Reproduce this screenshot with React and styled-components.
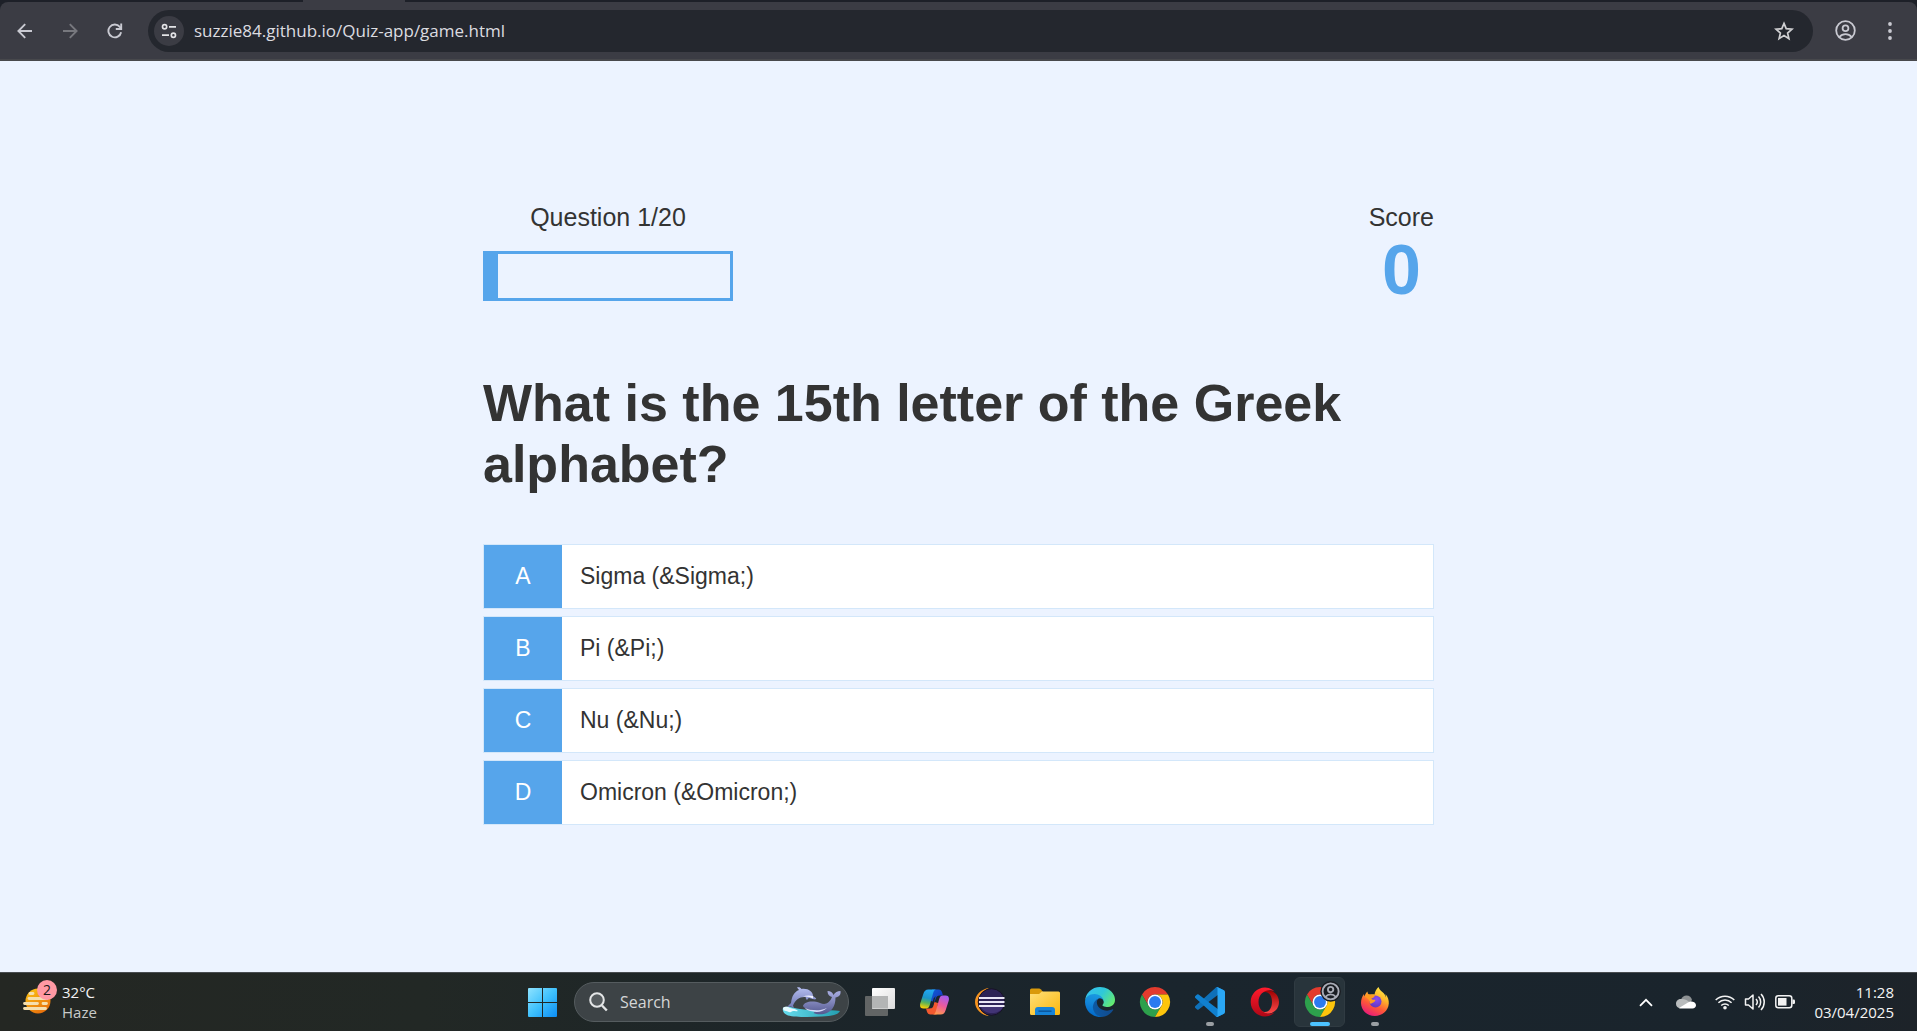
import React, { useState } from "react";
import styled, { createGlobalStyle } from "styled-components";

const UI_FONT = `"Open Sans", "Noto Sans", sans-serif`;
const PAGE_FONT = `"Liberation Sans", Arial, sans-serif`;
const BLUE = "#56a5eb";

const GlobalStyle = createGlobalStyle`
  *, *::before, *::after { box-sizing: border-box; }
  html, body, #root { height: 100%; }
  body { margin: 0; background: #ecf3ff; }
  button, input { font: inherit; color: inherit; }
  button { border: 0; background: none; padding: 0; cursor: pointer; }
  svg { display: block; flex: none; }
`;

const Screen = styled.div`
  min-height: 100%;
  display: flex;
  flex-direction: column;
  overflow: hidden;
`;

/* Browser toolbar */

const TabStrip = styled.div`
  height: 2px;
  background: #1d2028;
  display: flex;
  padding-left: 303px;
`;

const ActiveTab = styled.div`
  width: 102px;
  background: #3b3c44;
`;

const ToolbarBack = styled.div`
  background: #1d2028;
`;

const Toolbar = styled.header`
  height: 59px;
  display: flex;
  align-items: center;
  padding: 0 12px 0 10px;
  background: #3b3c44;
  border-bottom: 2px solid #47484c;
  border-radius: 8px 8px 0 0;
  font-family: ${UI_FONT};
`;

const NavButtons = styled.nav`
  display: flex;
  gap: 15px;
  margin-right: 18px;
`;

const IconButton = styled.button`
  width: 30px;
  height: 30px;
  display: grid;
  place-items: center;
  border-radius: 50%;
  color: ${(p) => (p.disabled ? "#77787e" : "#c9cad2")};
  background: ${(p) => (p.$filled ? "#3b3c44" : "transparent")};
`;

const AddressBar = styled.form`
  flex: 1;
  height: 42px;
  display: flex;
  align-items: center;
  gap: 10px;
  padding: 0 14px 0 6px;
  border-radius: 21px;
  background: #24272e;
`;

const AddressInput = styled.input`
  flex: 1;
  min-width: 0;
  height: 30px;
  border: 0;
  outline: 0;
  padding: 0;
  background: transparent;
  color: #dcdce0;
  font-size: 17px;
`;

const ToolbarActions = styled.div`
  display: flex;
  gap: 15px;
  margin-left: 17px;
`;

/* Quiz */

const Main = styled.main`
  flex: 1;
  display: flex;
  flex-direction: column;
  align-items: center;
  justify-content: center;
  padding: 0 20px;
  background: #ecf3ff;
  color: #333;
  font-family: ${PAGE_FONT};
`;

const Game = styled.section`
  width: 100%;
  max-width: 951px;
`;

const Hud = styled.div`
  display: flex;
  justify-content: space-between;
  margin-bottom: 64px;
`;

const HudItem = styled.div`
  display: flex;
  flex-direction: column;
  align-items: center;
  gap: ${(p) => p.$gap || 0}px;
`;

const HudLabel = styled.p`
  margin: 0;
  font-size: 25px;
  line-height: 28px;
`;

const ProgressBar = styled.div`
  width: 250px;
  height: 50px;
  border: 3px solid ${BLUE};
`;

const ProgressFill = styled.div`
  height: 100%;
  background: ${BLUE};
`;

const ScoreValue = styled.p`
  margin: 0;
  font-size: 70px;
  font-weight: 700;
  line-height: 78px;
  color: ${BLUE};
`;

const Question = styled.h1`
  margin: 0 0 49px;
  font-size: 52px;
  font-weight: 700;
  line-height: 61px;
`;

const Choices = styled.div`
  display: flex;
  flex-direction: column;
  gap: 7px;
  margin-bottom: 5px;
`;

const Choice = styled.button`
  width: 100%;
  min-height: 65px;
  display: flex;
  align-items: stretch;
  border: 1px solid #d3e7fa;
  background: #fff;
  font-size: 23px;
  text-align: left;
`;

const ChoicePrefix = styled.span`
  width: 78px;
  display: grid;
  place-items: center;
  background: ${BLUE};
  color: #fff;
`;

const ChoiceText = styled.span`
  flex: 1;
  display: flex;
  align-items: center;
  padding: 0 18px;
`;

/* Taskbar */

const Taskbar = styled.footer`
  height: 59px;
  display: grid;
  grid-template-columns: 1fr auto 1fr;
  align-items: center;
  border-top: 1px solid #484c50;
  background: linear-gradient(90deg, #242723 0%, #222825 22%, #1c2529 42%, #1a252d 60%, #1a242c 90%, #1d2329 100%);
  color: #f4f4f4;
  font-family: ${UI_FONT};
  font-size: 15px;
  line-height: 20px;
`;

const Weather = styled.button`
  justify-self: start;
  display: flex;
  align-items: center;
  gap: 4px;
  margin-left: 22px;
  text-align: left;
`;

const WeatherIcon = styled.span`
  position: relative;
  width: 36px;
  height: 44px;
  display: block;
`;

const Badge = styled.span`
  position: absolute;
  top: 0;
  left: 15px;
  width: 20px;
  height: 20px;
  border-radius: 50%;
  background: #ff99a4;
  color: #1a1a1a;
  font-size: 14px;
  text-align: center;
`;

const Line = styled.span`
  display: block;
  color: ${(p) => (p.$muted ? "#c8cac9" : "inherit")};
`;

const Dock = styled.nav`
  display: flex;
  align-items: center;
`;

const AppButton = styled.button`
  position: relative;
  width: 55px;
  height: 50px;
  display: grid;
  place-items: center;

  &::before {
    content: "";
    position: absolute;
    inset: 0 2px;
    border-radius: 6px;
    background: ${(p) => (p.$active ? "#28343b" : "transparent")};
    border: 1px solid ${(p) => (p.$active ? "#303b42" : "transparent")};
  }
  &::after {
    content: "";
    position: absolute;
    bottom: 1px;
    height: 4px;
    width: ${(p) => (p.$active ? 20 : p.$running ? 8 : 0)}px;
    border-radius: 2px;
    background: ${(p) => (p.$active ? "#4cc2ff" : "#9a9fa3")};
  }
  svg { position: relative; }
`;

const SearchBox = styled.label`
  width: 275px;
  height: 40px;
  display: flex;
  align-items: center;
  gap: 12px;
  margin: 0 3px 0 4px;
  padding: 0 6px 0 14px;
  border: 1px solid #555c5f;
  border-radius: 20px;
  background: #3d4346;
`;

const SearchInput = styled.input`
  flex: 1;
  min-width: 0;
  border: 0;
  outline: 0;
  padding: 0;
  background: transparent;
  font-size: 16px;
  &::placeholder { color: #d4d6d7; opacity: 1; }
`;

const Tray = styled.div`
  justify-self: end;
  display: flex;
  align-items: center;
  margin-right: 23px;
`;

const TrayButton = styled.button`
  width: 40px;
  height: 40px;
  display: grid;
  place-items: center;
`;

const StatusButton = styled.button`
  height: 40px;
  display: flex;
  align-items: center;
  gap: 9px;
  margin-left: 9px;
`;

const Clock = styled.button`
  margin-left: 19px;
  text-align: right;
`;

/* Icons */

const ArrowIcon = ({ flip }) => (
  <svg width="16" height="16" viewBox="0 0 16 16" fill="none" stroke="currentColor" strokeWidth="1.9">
    <path d={flip ? "M1 8H14M7.8 1.2 14.6 8l-6.8 6.8" : "M15 8H2M8.2 1.2 1.4 8l6.8 6.8"} />
  </svg>
);

const ReloadIcon = () => (
  <svg width="16" height="16" viewBox="0 0 16 16" fill="none" stroke="currentColor" strokeWidth="1.9">
    <path d="M14.1 9.2A6.4 6.4 0 1 1 12.8 3.9L14 5.3" />
    <path d="M14.2 .4v5.6H8.8" />
  </svg>
);

const TuneIcon = () => (
  <svg width="16" height="16" viewBox="0 0 16 16" fill="none" stroke="#e3e3e6" strokeWidth="1.7">
    <circle cx="3.6" cy="3.8" r="2.1" />
    <path d="M8 3.8h7M1 12.2h7" />
    <circle cx="12.4" cy="12.2" r="2.1" />
  </svg>
);

const StarIcon = () => (
  <svg width="20" height="20" viewBox="0 0 20 20" fill="none" stroke="#d0d0d2" strokeWidth="1.7">
    <path d="m10 2.4 2.2 5.3 5.8.5-4.4 3.8 1.3 5.6-4.9-3-4.9 3L6.400 12 2 8.200l5.800-.5z" />
  </svg>
);

const ProfileIcon = ({ size = 21 }) => (
  <svg width={size} height={size} viewBox="0 0 21 21" fill="none" stroke="currentColor" strokeWidth="1.8">
    <circle cx="10.500" cy="10.500" r="9.300" />
    <circle cx="10.500" cy="8.300" r="2.900" />
    <path d="M4.300 17c1.800-2 3.900-2.800 6.200-2.800s4.400.8 6.200 2.800" />
  </svg>
);

const DotsIcon = () => (
  <svg width="4" height="18" viewBox="0 0 4 18" fill="currentColor">
    <circle cx="2" cy="2" r="1.900" />
    <circle cx="2" cy="9" r="1.900" />
    <circle cx="2" cy="16" r="1.900" />
  </svg>
);

const HazeIcon = () => (
  <svg width="36" height="40" viewBox="0 1 36 40">
    <defs>
      <linearGradient id="haze" x1="0" y1="0" x2=".6" y2="1">
        <stop offset="0" stopColor="#fdc813" />
        <stop offset="1" stopColor="#e8710c" />
      </linearGradient>
    </defs>
    <circle cx="16" cy="22" r="12.500" fill="url(#haze)" />
    <g stroke="#f5dfae" strokeWidth="2.800" strokeLinecap="round">
      <path d="M8 14.500h3" />
      <path d="M7 19.500h18" />
      <path d="M2.500 24.500h13M21 24.500h3.500" />
      <path d="M2.500 29.500h21" />
    </g>
  </svg>
);

const WindowsIcon = () => (
  <svg width="29" height="29" viewBox="0 0 29 29">
    <defs>
      <linearGradient id="win" gradientUnits="userSpaceOnUse" x1="0" y1="0" x2="29" y2="29">
        <stop offset="0" stopColor="#8fe3ff" />
        <stop offset=".5" stopColor="#3fc1fd" />
        <stop offset="1" stopColor="#0c8df5" />
      </linearGradient>
    </defs>
    <path fill="url(#win)" d="M0 1q0-1 1-1h13v14H0zM15 0h13q1 0 1 1v13H15zM0 15h14v14H1q-1 0-1-1zM15 15h14v13q0 1-1 1H15z" />
  </svg>
);

const SearchIcon = () => (
  <svg width="19" height="20" viewBox="0 0 19 20" fill="none" stroke="#e4e6e7">
    <circle cx="8" cy="8" r="6.800" strokeWidth="2" fill="#555b5e" />
    <path d="m13 13.500 4.800 5" strokeWidth="2.400" />
  </svg>
);

const DolphinIcon = () => (
  <svg width="60" height="32" viewBox="0 0 60 32">
    <defs>
      <linearGradient id="dol" x1="0" y1="0" x2="0" y2="1">
        <stop offset="0" stopColor="#b4bdf0" />
        <stop offset="1" stopColor="#7078b4" />
      </linearGradient>
      <linearGradient id="whale" x1="0" y1="0" x2="0" y2="1">
        <stop offset="0" stopColor="#a9aee2" />
        <stop offset="1" stopColor="#54588f" />
      </linearGradient>
      <linearGradient id="sea" x1="0" y1="0" x2="1" y2="0">
        <stop offset="0" stopColor="#66dced" />
        <stop offset="1" stopColor="#249eb0" />
      </linearGradient>
    </defs>
    <path fill="url(#sea)" d="M1 22c4-3 11 0 17 1 10 2 29 0 40 2-2 4-8 5-18 5.500-12 .8-27 .8-34-1-4-1.500-6-5-5-7.500Z" />
    <path fill="#e8fbff" d="M1 22c2-2 5-1 7 0 3 .5 6 1 8 3-3 1-5-1-7 1-2 1-3-1-5-1-2 0-3-1-3-3Z" />
    <path fill="url(#dol)" d="M15 1.500c2-.5 3.500 0 4.500 1.500C26 2 31 6 31 10l3 2.300c.5 1-.8 1.300-2.200 1L27 12c-1 0-1 1-2 2-1-1-1.500-2-1.300-3-6-.5-10.500 3-12.700 8.500l1 2.500-3-1.500-4 .5 4-4C10 10 12 6 17 4Z" />
    <path fill="#eef0ff" d="M31 12.600c-3-2-7-2.600-10.500-1.900 3-1.200 6.500-1.700 10.500-.7Z" />
    <path fill="url(#whale)" d="M21 20c1-4 9-6 17-3 5 2 9 1 12-6-3-.5-4.500-3-4.500-6 3 0 5 1.500 6 4 1.500-2.500 4-4 7-4 .5 4-1.500 6-5 6.500 0 9-4 15-12 16.500-4 .6-8 0-10-1l3-3c-6 .5-12-1-13.500-4Z" />
    <path fill="#d8dbfa" d="M23 22c6 2.500 14 3.500 22 0-4 4-10 4.500-14 3.500-4-.7-7-1.700-8-3.500Z" />
  </svg>
);

const TaskViewIcon = () => (
  <svg width="30" height="30" viewBox="0 0 30 30">
    <defs>
      <linearGradient id="tv" x1="0" y1="0" x2="1" y2="1">
        <stop offset="0" stopColor="#fff" />
        <stop offset="1" stopColor="#dcdcdc" />
      </linearGradient>
    </defs>
    <rect x="0" y="9" width="23" height="20" rx="1" fill="#626565" />
    <rect x="7" y="1" width="23" height="21" rx="1" fill="url(#tv)" />
    <path d="M7 9h16v12.500H8q-1 0-1-1z" fill="#b3b5b5" />
  </svg>
);

const CopilotIcon = () => (
  <svg width="29" height="26" viewBox="0 0 29 26">
    <defs>
      <linearGradient id="cpA" x1=".5" y1="0" x2=".3" y2="1">
        <stop offset="0" stopColor="#22a8f5" />
        <stop offset=".45" stopColor="#1b95c9" />
        <stop offset=".7" stopColor="#57b35c" />
        <stop offset="1" stopColor="#ffd000" />
      </linearGradient>
      <linearGradient id="cpB" x1=".7" y1="0" x2=".3" y2="1">
        <stop offset="0" stopColor="#a45cf0" />
        <stop offset=".5" stopColor="#ec5a9b" />
        <stop offset="1" stopColor="#ff9a4c" />
      </linearGradient>
      <linearGradient id="cpC" x1="0" y1="0" x2="1" y2="1">
        <stop offset="0" stopColor="#0d5ed7" />
        <stop offset="1" stopColor="#1a2fb8" />
      </linearGradient>
    </defs>
    <path fill="url(#cpC)" d="M12 .5h6.500c2 0 3 1 3.600 3L23 6.500h-3.500c-2 0-3 1-3.700 3L14.500 13 11 12Z" />
    <path fill="#f2592f" d="M16.500 25.500h-6c-2 0-3-1-3.600-3L6 19.500h3.500c2 0 3-1 3.700-3L14.500 13 18 14Z" />
    <path fill="url(#cpA)" d="M8.500.5h8c-2 0-2.800 1.500-3.500 4L9.800 16c-.7 2.500-1.700 3.500-4 3.500H3.500c-3 0-4-2-3.200-5.200L3.300 5C4.200 2 5.500.5 8.500.5Z" />
    <path fill="url(#cpB)" d="M20.500 25.500h-8c2 0 2.800-1.500 3.500-4L19.200 10c.7-2.500 1.700-3.500 4-3.500h2.300c3 0 4 2 3.200 5.200L25.700 21c-.9 3-2.200 4.500-5.200 4.500Z" />
    <path fill="#1c262c" d="m13.600 9.500 2-2.500-2.600 11-2 1.500Z" />
  </svg>
);

const EclipseIcon = () => (
  <svg width="30" height="30" viewBox="0 0 30 30">
    <path fill="#f7941e" d="M14 1C6 2 0 8 0 15s6 13 14 14C8 26 5 21 5 15S8 4 14 1Z" />
    <circle cx="16.500" cy="15" r="13.300" fill="#2c2255" stroke="#171325" />
    <path fill="#423475" d="M6 20h22c-2 4-6 6-11 6S8 24 6 20Z" />
    <path stroke="#e9e6f5" strokeWidth="2" d="M4 11h25.500M4 15h25.500M4 19h25.500" />
  </svg>
);

const FolderIcon = () => (
  <svg width="30" height="28" viewBox="0 0 30 28">
    <defs>
      <linearGradient id="fold" x1="0" y1="0" x2="1" y2="1">
        <stop offset="0" stopColor="#ffe07a" />
        <stop offset="1" stopColor="#fbb70c" />
      </linearGradient>
    </defs>
    <path fill="#d99a0b" d="M0 2q0-1.500 1.500-1.500H9q1 0 2 1L13 4v5H0z" />
    <path fill="url(#fold)" d="M0 6h9l3-2.500h16.500Q30 3.500 30 5v20.500Q30 27 28.500 27h-27Q0 27 0 25.500z" />
    <path fill="#1683d8" d="M5 27v-5q0-3 3-3h14q3 0 3 3v5z" />
    <path stroke="#0b569c" strokeWidth="1.500" d="M8.500 23.200h13" />
  </svg>
);

const EdgeIcon = () => (
  <svg width="30" height="30" viewBox="0 0 256 256">
    <defs>
      <linearGradient id="edA" x1="0" y1="0" x2="1" y2="0">
        <stop offset="0" stopColor="#0c59a4" />
        <stop offset="1" stopColor="#114a8b" />
      </linearGradient>
      <linearGradient id="edB" x1=".6" y1="0" x2=".4" y2="1">
        <stop offset="0" stopColor="#1b9de2" />
        <stop offset=".5" stopColor="#1284d8" />
        <stop offset="1" stopColor="#0067c8" />
      </linearGradient>
      <linearGradient id="edC" x1="0" y1=".2" x2="1" y2=".7">
        <stop offset="0" stopColor="#35c1f1" />
        <stop offset=".5" stopColor="#2fc8d8" />
        <stop offset="1" stopColor="#66eb6e" />
      </linearGradient>
    </defs>
    <path fill="url(#edA)" d="M235.680 190.430a93.730 93.730 0 0 1-10.540 4.710 101.870 101.870 0 0 1-35.900 6.460c-47.320 0-88.540-32.550-88.540-74.320A31.480 31.480 0 0 1 117.130 100c-42.800 1.800-53.800 46.400-53.800 72.530 0 73.880 68.090 81.370 82.760 81.370 7.910 0 19.840-2.300 27-4.560l1.310-.44a128.340 128.340 0 0 0 66.600-52.800 4 4 0 0 0-5.320-5.670Z" />
    <path fill="url(#edB)" d="M105.730 241.420a79.200 79.200 0 0 1-22.740-21.340 80.720 80.720 0 0 1 29.530-120c3.120-1.470 8.450-4.130 15.540-4a32.350 32.350 0 0 1 25.690 13 31.880 31.880 0 0 1 6.360 18.660c0-.21 24.460-79.600-80-79.600-43.900 0-80 41.660-80 78.210a130.150 130.150 0 0 0 12.110 56 128 128 0 0 0 156.380 67.110 75.550 75.550 0 0 1-62.780-8Z" />
    <path fill="url(#edC)" d="M152.330 149.860c-.81 1.050-3.300 2.500-3.300 5.660 0 2.610 1.700 5.120 4.720 7.230 14.380 10 41.490 8.680 41.560 8.680a59.560 59.560 0 0 0 30.270-8.350A61.380 61.380 0 0 0 256 110.190c.26-22.410-8-37.310-11.340-43.910C223.460 24.830 177.720 0 128 0A128 128 0 0 0 0 126.200c.48-36.540 36.800-66.050 80-66.050 3.500 0 23.460.34 42 10.070 16.340 8.580 24.900 18.940 30.850 29.210 6.180 10.670 7.280 24.150 7.280 29.520s-2.740 13.330-7.800 20.910Z" />
  </svg>
);

const ChromeIcon = ({ profile }) => (
  <svg width="30" height="30" viewBox="0 0 48 48" overflow="visible">
    <path fill="#e33b2e" d="M24 12H44.800A24 24 0 0 0 3.200 12L13.600 30A12 12 0 0 1 24 12Z" />
    <path fill="#2da04c" d="M13.600 30 3.200 12A24 24 0 0 0 24 48L34.400 30A12 12 0 0 1 13.600 30Z" />
    <path fill="#fdc50c" d="M34.400 30 24 48A24 24 0 0 0 44.800 12H24A12 12 0 0 1 34.400 30Z" />
    <circle cx="24" cy="24" r="12" fill="#fff" />
    <circle cx="24" cy="24" r="9.500" fill="#2a7af0" />
    {profile && (
      <g>
        <circle cx="41" cy="7" r="16.500" fill="#1a1d22" />
        <g fill="none" stroke="#a9acb6" strokeWidth="3">
          <circle cx="41" cy="7" r="12.800" />
          <circle cx="41" cy="4" r="4.300" />
          <path d="M32.500 16c2.500-3 5-4.200 8.500-4.200s6 1.200 8.500 4.200" />
        </g>
      </g>
    )}
  </svg>
);

const VsCodeIcon = () => (
  <svg width="30" height="30" viewBox="0 0 100 100">
    <path fill="#0e70b8" d="M96.460 10.800 75.860.88a6.230 6.230 0 0 0-7.110 1.210L1.300 63.580a4.170 4.170 0 0 0 0 6.160l5.510 5.010a4.170 4.170 0 0 0 5.320.24l81.230-61.620c2.730-2.070 6.640-.12 6.640 3.300v-.24a6.250 6.250 0 0 0-3.540-5.630Z" />
    <path fill="#1080cf" d="m96.460 89.200-20.600 9.920a6.230 6.230 0 0 1-7.110-1.210L1.300 36.420a4.170 4.170 0 0 1 0-6.160l5.510-5.010a4.170 4.170 0 0 1 5.320-.24l81.230 61.620c2.730 2.070 6.640.12 6.640-3.300v.24a6.250 6.250 0 0 1-3.540 5.630Z" />
    <path fill="#2aa7f5" d="M75.860 99.130a6.230 6.230 0 0 1-7.110-1.210c2.310 2.310 6.250.67 6.250-2.590V4.670c0-3.260-3.940-4.890-6.250-2.590a6.230 6.230 0 0 1 7.110-1.200l20.600 9.900a6.250 6.250 0 0 1 3.540 5.630v67.180a6.250 6.250 0 0 1-3.540 5.630l-20.600 9.910Z" />
  </svg>
);

const OperaIcon = () => (
  <svg width="30" height="30" viewBox="0 0 30 30">
    <defs>
      <linearGradient id="opA" x1="0" y1="0" x2="0" y2="1">
        <stop offset="0" stopColor="#ff1b2d" />
        <stop offset="1" stopColor="#b00716" />
      </linearGradient>
      <linearGradient id="opB" x1="0" y1="0" x2="0" y2="1">
        <stop offset="0" stopColor="#9c0000" />
        <stop offset="1" stopColor="#ff4b4b" />
      </linearGradient>
    </defs>
    <path fill="url(#opB)" d="M11 6c5-6 18-2 18 9s-13 15-18 9c7 3 11-2 11-9S18 3 11 6Z" />
    <path fill="url(#opA)" fillRule="evenodd" d="M15 .5C7 .5.700 7 .700 15S7 29.500 15 29.500c4 0 7-1.500 9.500-4C18 29 8.500 25 8.500 15S18 1 24.500 4.500C22 2 19 .5 15 .5Z" />
  </svg>
);

const FirefoxIcon = () => (
  <svg width="30" height="30" viewBox="0 0 30 30">
    <defs>
      <linearGradient id="ffA" x1=".8" y1="0" x2=".3" y2="1">
        <stop offset="0" stopColor="#fff04a" />
        <stop offset=".35" stopColor="#ffb52a" />
        <stop offset=".65" stopColor="#ff5a36" />
        <stop offset="1" stopColor="#e8187c" />
      </linearGradient>
      <radialGradient id="ffB" cx=".6" cy=".3" r=".8">
        <stop offset="0" stopColor="#8a4bf5" />
        <stop offset="1" stopColor="#5b36b8" />
      </radialGradient>
    </defs>
    <path fill="url(#ffA)" d="M18.500 0c1 3 3 4 5 6 1.500 1.500 2 3 2.500 4.500 0-1.500-.3-2.500-.8-3.500 2.800 2.500 3.800 6 3.600 9.500C28.300 24 22 29 14.800 29 7 29 1 23 1 16c0-3.500 1-6.500 3-9 0 1 .2 1.800.5 2.500C5 7.500 6 5.500 7.500 4.500c0 1.500.5 2.500 1.500 3 2 0 4-.5 5.500 0C15 4.500 16.500 1.500 18.500 0Z" />
    <circle cx="15.500" cy="14.500" r="6" fill="url(#ffB)" />
    <path fill="#ff9a1f" d="M4.500 9.500c2-2 4-2.300 6-1.500 2 .2 3.500 0 4.500.5-.5 1.700-2 2.500-3.500 3 0 1.500 2.500 1 4 1.500-.5 2-2.500 2.500-4 3.500-1.500.5-2-.5-2-2-.5-2.500-3-4-5-5Z" />
  </svg>
);

const ChevronUpIcon = () => (
  <svg width="14" height="9" viewBox="0 0 14 9" fill="none" stroke="#fff" strokeWidth="1.800">
    <path d="m1 7.800 6-6 6 6" />
  </svg>
);

const CloudIcon = () => (
  <svg width="20" height="14" viewBox="0 0 20 14">
    <path fill="#8e9294" d="M5 5c.5-3 3-4.500 5.500-4.500 3 0 5 2 5.500 4.500L13 9 4 11Z" />
    <path fill="#b9bcbd" d="M4.500 4C2 4 0 6.200 0 8.700 0 11 1.500 13 4 13l10-5C12 5 8 3.600 4.500 4Z" />
    <path fill="#fff" d="M3 13 12 7.500c1-.7 2.500-1.200 3.800-1C18.500 6.700 20 8.500 20 10.300c0 2-1.500 3.200-3.500 3.200h-12Q3.500 13.500 3 13Z" />
  </svg>
);

const WifiIcon = () => (
  <svg width="20" height="16" viewBox="0 0 20 16" fill="none" stroke="#f3f3f3" strokeWidth="1.500">
    <path d="M.7 6a13.200 13.200 0 0 1 18.600 0M3.400 8.800a9.300 9.300 0 0 1 13.200 0M6.200 11.500a5.400 5.400 0 0 1 7.600 0" />
    <circle cx="10" cy="13.700" r="1.800" fill="#f3f3f3" stroke="none" />
  </svg>
);

const SpeakerIcon = () => (
  <svg width="22" height="18" viewBox="0 0 22 18" fill="none" stroke="#f3f3f3" strokeWidth="1.500">
    <path d="M1.500 6v6h3L9 16V2L4.500 6z" strokeLinejoin="round" />
    <path d="M12 6a4.500 4.500 0 0 1 0 6M14.500 3.500a8 8 0 0 1 0 11M17 1a11.500 11.500 0 0 1 0 16" />
  </svg>
);

const BatteryIcon = () => (
  <svg width="20" height="14" viewBox="0 0 20 14">
    <rect x=".8" y=".8" width="16" height="12" rx="2.500" fill="none" stroke="#f3f3f3" strokeWidth="1.500" />
    <rect x="3" y="3" width="8.500" height="7.600" fill="#f3f3f3" />
    <path d="M17.500 4.500h1.200q1.300 0 1.300 1.300v2q0 1.300-1.300 1.300h-1.200z" fill="#f3f3f3" />
  </svg>
);

const CHOICES = [
  { prefix: "A", text: "Sigma (&Sigma;)" },
  { prefix: "B", text: "Pi (&Pi;)" },
  { prefix: "C", text: "Nu (&Nu;)" },
  { prefix: "D", text: "Omicron (&Omicron;)" },
];

const APPS = [
  { name: "Task view", icon: <TaskViewIcon /> },
  { name: "Copilot", icon: <CopilotIcon /> },
  { name: "Eclipse", icon: <EclipseIcon /> },
  { name: "File Explorer", icon: <FolderIcon /> },
  { name: "Microsoft Edge", icon: <EdgeIcon /> },
  { name: "Google Chrome", icon: <ChromeIcon /> },
  { name: "Visual Studio Code", icon: <VsCodeIcon />, running: true },
  { name: "Opera", icon: <OperaIcon /> },
  { name: "Google Chrome profile", icon: <ChromeIcon profile />, active: true },
  { name: "Firefox", icon: <FirefoxIcon />, running: true },
];

function BrowserBar() {
  const [url, setUrl] = useState("suzzie84.github.io/Quiz-app/game.html");
  return (
    <>
      <TabStrip><ActiveTab /></TabStrip>
      <ToolbarBack>
        <Toolbar>
          <NavButtons aria-label="Navigation">
            <IconButton aria-label="Back"><ArrowIcon /></IconButton>
            <IconButton aria-label="Forward" disabled><ArrowIcon flip /></IconButton>
            <IconButton aria-label="Reload"><ReloadIcon /></IconButton>
          </NavButtons>
          <AddressBar onSubmit={(e) => e.preventDefault()}>
            <IconButton type="button" aria-label="Site information" $filled><TuneIcon /></IconButton>
            <AddressInput aria-label="Address" value={url} onChange={(e) => setUrl(e.target.value)} />
            <IconButton type="button" aria-label="Bookmark this page"><StarIcon /></IconButton>
          </AddressBar>
          <ToolbarActions>
            <IconButton aria-label="Profile"><ProfileIcon /></IconButton>
            <IconButton aria-label="Menu"><DotsIcon /></IconButton>
          </ToolbarActions>
        </Toolbar>
      </ToolbarBack>
    </>
  );
}

function Quiz() {
  const current = 1;
  const total = 20;
  return (
    <Main>
      <Game>
        <Hud>
          <HudItem $gap={20}>
            <HudLabel id="progress-label">Question {current}/{total}</HudLabel>
            <ProgressBar role="progressbar" aria-labelledby="progress-label" aria-valuenow={current} aria-valuemax={total}>
              <ProgressFill style={{ width: `${(current / total) * 100}%` }} />
            </ProgressBar>
          </HudItem>
          <HudItem>
            <HudLabel>Score</HudLabel>
            <ScoreValue>0</ScoreValue>
          </HudItem>
        </Hud>
        <Question>What is the 15th letter of the Greek alphabet?</Question>
        <Choices>
          {CHOICES.map((c) => (
            <Choice key={c.prefix} type="button">
              <ChoicePrefix>{c.prefix}</ChoicePrefix>
              <ChoiceText>{c.text}</ChoiceText>
            </Choice>
          ))}
        </Choices>
      </Game>
    </Main>
  );
}

function SystemTaskbar() {
  return (
    <Taskbar>
      <Weather>
        <WeatherIcon>
          <HazeIcon />
          <Badge>2</Badge>
        </WeatherIcon>
        <span>
          <Line>32°C</Line>
          <Line $muted>Haze</Line>
        </span>
      </Weather>
      <Dock aria-label="Taskbar">
        <AppButton aria-label="Start"><WindowsIcon /></AppButton>
        <SearchBox>
          <SearchIcon />
          <SearchInput type="text" placeholder="Search" aria-label="Search" />
          <DolphinIcon />
        </SearchBox>
        {APPS.map((app) => (
          <AppButton key={app.name} aria-label={app.name} $running={app.running} $active={app.active}>
            {app.icon}
          </AppButton>
        ))}
      </Dock>
      <Tray>
        <TrayButton aria-label="Show hidden icons"><ChevronUpIcon /></TrayButton>
        <TrayButton aria-label="OneDrive"><CloudIcon /></TrayButton>
        <StatusButton aria-label="Network, volume and battery">
          <WifiIcon />
          <SpeakerIcon />
          <BatteryIcon />
        </StatusButton>
        <Clock>
          <Line>11:28</Line>
          <Line>03/04/2025</Line>
        </Clock>
      </Tray>
    </Taskbar>
  );
}

export default function App() {
  return (
    <Screen>
      <GlobalStyle />
      <BrowserBar />
      <Quiz />
      <SystemTaskbar />
    </Screen>
  );
}
